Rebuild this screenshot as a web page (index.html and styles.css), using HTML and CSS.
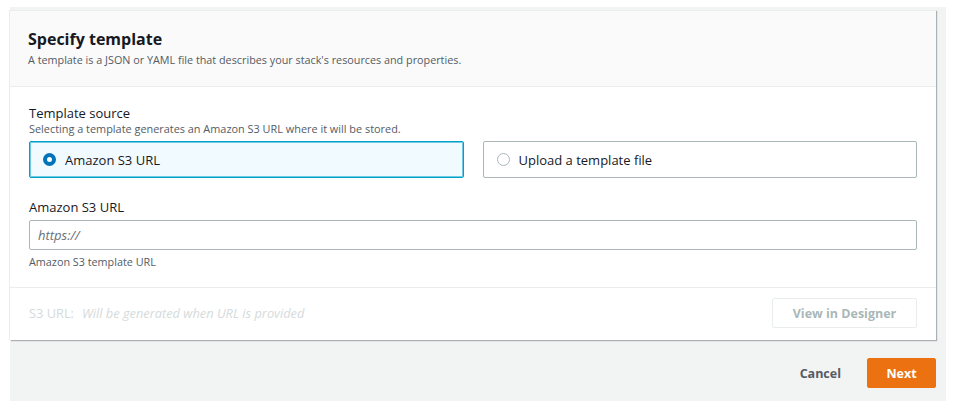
FILE: index.html
```html
<!DOCTYPE html>
<html>
<head>
<meta charset="utf-8">
<link rel="stylesheet" href="styles.css">
</head>
<body>
<div class="page">
  <div class="card">
    <div class="card-header">
      <h2 class="title">Specify template</h2>
      <p class="subtitle">A template is a JSON or YAML file that describes your stack's resources and properties.</p>
    </div>
    <div class="card-body">
      <div class="field">
        <div class="label">Template source</div>
        <div class="desc">Selecting a template generates an Amazon S3 URL where it will be stored.</div>
        <div class="tiles">
          <div class="tile selected"><span class="radio on"></span><span class="tile-text">Amazon S3 URL</span></div>
          <div class="tile"><span class="radio"></span><span class="tile-text">Upload a template file</span></div>
        </div>
      </div>
      <div class="field field-url">
        <div class="label">Amazon S3 URL</div>
        <div class="input"><span class="placeholder">https://</span></div>
        <div class="hint">Amazon S3 template URL</div>
      </div>
    </div>
    <div class="card-footer">
      <div class="s3url"><span class="s3-key">S3 URL:</span><span class="s3-val">Will be generated when URL is provided</span></div>
      <button class="btn-designer">View in Designer</button>
    </div>
  </div>
  <div class="actions">
    <button class="btn-cancel">Cancel</button>
    <button class="btn-next">Next</button>
  </div>
</div>
</body>
</html>
```
FILE: styles.css
```css
html, body {
  margin: 0;
  padding: 0;
  background: #ffffff;
}
body {
  font-family: "Open Sans", "Noto Sans", sans-serif;
  color: #16191f;
  padding: 7px 12px 0 10px;
}
.page {
  background: #f2f3f3;
  padding: 3px 10px 13px 0;
  width: 926px;
}
.card {
  background: #ffffff;
  box-shadow: 1px 1px 1px 0 rgba(0, 28, 36, 0.3), -1px 0 0 0 #eaeded;
  border-top: 1px solid #eaeded;
}
.card-header {
  background: #fafafa;
  border-bottom: 1px solid #eaeded;
  padding: 17px 18px 19px 18px;
  height: 39px;
}
.title {
  margin: 0;
  font-size: 16px;
  font-weight: 700;
  line-height: 22px;
  color: #16191f;
}
.subtitle {
  margin: 2px 0 0;
  font-size: 10.8px;
  line-height: 15px;
  color: #545b64;
}
.card-body {
  padding: 18px 19px 18px 19px;
  border-bottom: 1px solid #eaeded;
}
.label {
  font-size: 13px;
  line-height: 17px;
  color: #16191f;
}
.desc {
  font-size: 10.9px;
  line-height: 14px;
  color: #545b64;
  margin-bottom: 5px;
}
.tiles {
  display: flex;
  gap: 19px;
}
.tile {
  flex: 1;
  border: 1px solid #aab7b8;
  border-radius: 2px;
  display: flex;
  align-items: center;
  padding-left: 13px;
  box-sizing: border-box;
  height: 37px;
}
.tile.selected {
  background: #f1faff;
  border: 1px solid #00a1c9;
  box-shadow: inset 0 0 0 1px #6dcbe6;
}
.radio {
  width: 13px;
  height: 13px;
  border-radius: 50%;
  border: 1px solid #aab7b8;
  box-sizing: border-box;
  background: #fff;
  margin-right: 9px;
}
.radio.on {
  border: 4px solid #0073bb;
  background: #fff;
}
.tile-text {
  font-size: 13px;
  color: #16191f;
}
.field-url {
  margin-top: 21px;
}
.field-url .label {
  margin-bottom: 4px;
}
.input {
  height: 30px;
  box-sizing: border-box;
  border: 1px solid #aab7b8;
  border-radius: 2px;
  display: flex;
  align-items: center;
  padding-left: 8px;
}
.placeholder {
  font-style: italic;
  font-size: 13px;
  color: #687078;
}
.hint {
  font-size: 10.8px;
  line-height: 14px;
  color: #545b64;
  margin-top: 5px;
}
.card-footer {
  display: flex;
  justify-content: space-between;
  align-items: center;
  padding: 10px 19px 12px 19px;
}
.s3url {
  font-size: 12.8px;
  color: #d5dbdb;
}
.s3-key {
  margin-right: 8px;
}
.s3-val {
  font-style: italic;
}
.btn-designer {
  width: 145px;
  height: 30px;
  background: #fff;
  border: 1px solid #eaeded;
  border-radius: 2px;
  font-family: inherit;
  font-size: 12.5px;
  font-weight: 700;
  color: #aab7b8;
}
.actions {
  display: flex;
  justify-content: flex-end;
  align-items: center;
  gap: 26px;
  padding-top: 18px;
}
.btn-cancel {
  background: none;
  border: none;
  font-family: inherit;
  font-size: 12.5px;
  font-weight: 700;
  color: #545b64;
  padding: 0;
}
.btn-next {
  width: 69px;
  height: 30px;
  background: #ec7211;
  border: 1px solid #ec7211;
  border-radius: 2px;
  color: #fff;
  font-family: inherit;
  font-size: 12.5px;
  font-weight: 700;
}
```
